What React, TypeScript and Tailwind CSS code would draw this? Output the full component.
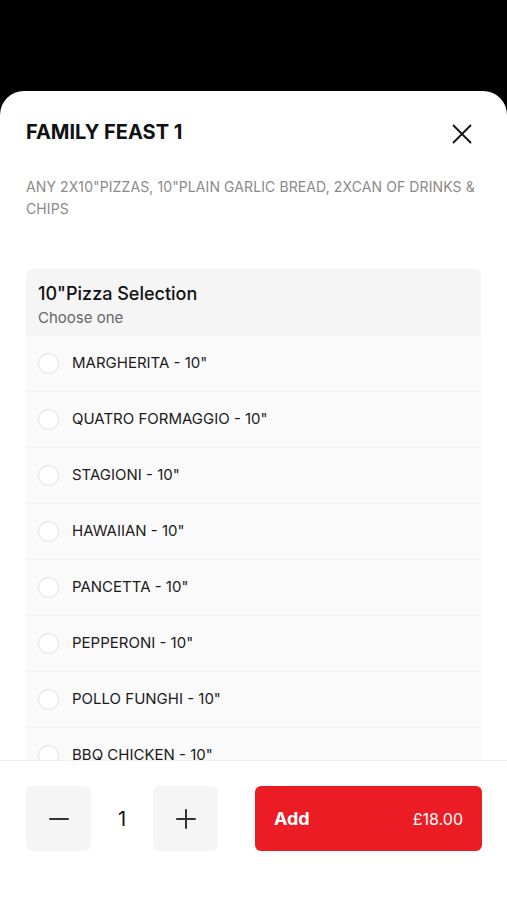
import React from "react";

const items = [
  "MARGHERITA - 10\"",
  "QUATRO FORMAGGIO - 10\"",
  "STAGIONI - 10\"",
  "HAWAIIAN - 10\"",
  "PANCETTA - 10\"",
  "PEPPERONI - 10\"",
  "POLLO FUNGHI - 10\"",
  "BBQ CHICKEN - 10\"",
  "VEGETARIAN - 10\"",
];

export default function App() {
  return (
    <div
      className="h-[900px] w-[507px] bg-black flex flex-col overflow-hidden"
      style={{ fontFamily: "Inter, 'Noto Sans', sans-serif" }}
    >
      <div className="h-[91px] shrink-0" />
      <div className="flex-1 bg-white rounded-t-[24px] flex flex-col overflow-hidden">
        <div className="flex-1 overflow-hidden px-[26px]">
          <div className="flex items-start justify-between pt-[27px]">
            <h1 className="text-[20px] leading-[28px] font-bold text-[#111]">FAMILY FEAST 1</h1>
            <svg width="20" height="20" viewBox="0 0 20 20" className="mt-[6px] mr-[9px]" fill="none" stroke="#111" strokeWidth="1.8" strokeLinecap="round">
              <path d="M1.5 1.5 L18.5 18.5 M18.5 1.5 L1.5 18.5" />
            </svg>
          </div>
          <p className="mt-[30px] text-[14px] leading-[22px] text-[#8a8a8a] tracking-[0.1px]">
            ANY 2X10"PIZZAS, 10"PLAIN GARLIC BREAD, 2XCAN OF DRINKS &amp; CHIPS
          </p>
          <div className="mt-[49px] rounded-t-[6px] overflow-hidden">
            <div className="bg-[#f5f5f5] px-[12px] pt-[12px] pb-[8px]">
              <div className="text-[18px] leading-[26px] font-medium text-[#111]">10"Pizza Selection</div>
              <div className="mt-[1px] text-[15px] leading-[20px] text-[#666]">Choose one</div>
            </div>
            {items.map((t) => (
              <div key={t} className="h-[56px] bg-[#fafafa] border-b border-[#f3f3f3] flex items-center px-[12px]">
                <div className="w-[21px] h-[21px] rounded-full border border-[#e0e0e0] bg-white" />
                <span className="ml-[13px] text-[15px] text-[#1a1a1a]">{t}</span>
              </div>
            ))}
          </div>
        </div>
        <div className="h-[140px] shrink-0 bg-white border-t border-[#efefef] flex items-start px-[26px] pt-[25px]">
          <button className="shrink-0 w-[65px] h-[65px] bg-[#f5f5f5] rounded-[6px] flex items-center justify-center">
            <svg width="22" height="22" viewBox="0 0 22 22" stroke="#333" strokeWidth="2" strokeLinecap="round">
              <path d="M2 11 H20" />
            </svg>
          </button>
          <div className="shrink-0 w-[62px] h-[65px] flex items-center justify-center text-[20px] text-[#111]">1</div>
          <button className="shrink-0 w-[65px] h-[65px] bg-[#f5f5f5] rounded-[6px] flex items-center justify-center">
            <svg width="22" height="22" viewBox="0 0 22 22" stroke="#333" strokeWidth="2" strokeLinecap="round">
              <path d="M2 11 H20 M11 2 V20" />
            </svg>
          </button>
          <button className="shrink-0 ml-[37px] w-[227px] h-[65px] bg-[#ec1c24] rounded-[6px] flex items-center justify-between pl-[19px] pr-[19px] text-white">
            <span className="text-[18px] font-bold">Add</span>
            <span className="text-[16px]">£18.00</span>
          </button>
        </div>
      </div>
    </div>
  );
}
